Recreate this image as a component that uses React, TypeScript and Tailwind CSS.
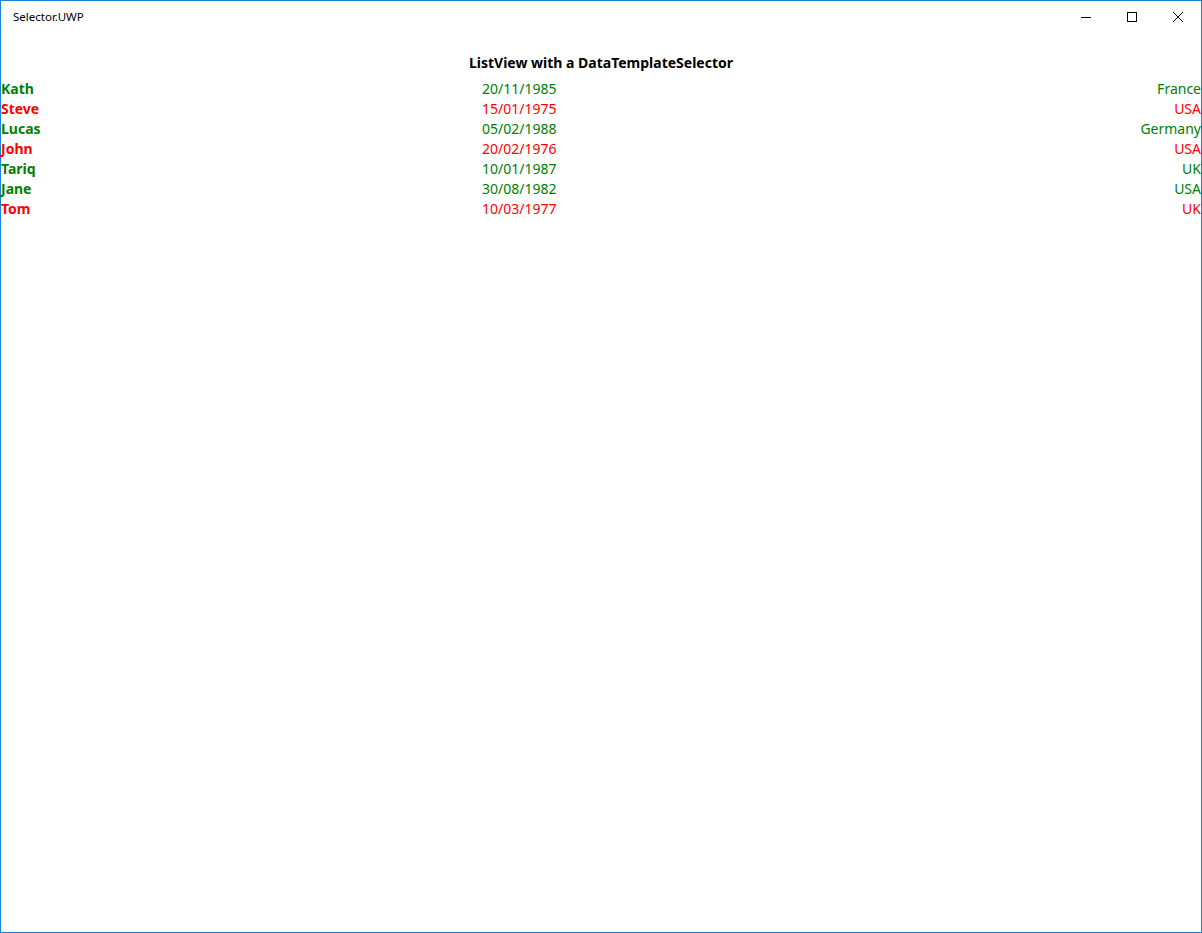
import React from 'react';

type Person = {
  name: string;
  born: string;
  country: string;
  flagged: boolean;
};

// flagged = rendered with the "red" template
const people: Person[] = [
  { name: 'Kath', born: '20/11/1985', country: 'France', flagged: false },
  { name: 'Steve', born: '15/01/1975', country: 'USA', flagged: true },
  { name: 'Lucas', born: '05/02/1988', country: 'Germany', flagged: false },
  { name: 'John', born: '20/02/1976', country: 'USA', flagged: true },
  { name: 'Tariq', born: '10/01/1987', country: 'UK', flagged: false },
  { name: 'Jane', born: '30/08/1982', country: 'USA', flagged: false },
  { name: 'Tom', born: '10/03/1977', country: 'UK', flagged: true },
];

const TitleBar: React.FC = () => (
  <div className="flex h-[31px] items-center justify-between">
    <span className="pl-3 text-[11.5px] text-black">Selector.UWP</span>
    <div className="flex h-full">
      <button className="flex h-full w-[46px] items-center justify-center">
        <svg width="10" height="10" viewBox="0 0 10 10">
          <path d="M0 5.5h10" stroke="#000" strokeWidth="1" />
        </svg>
      </button>
      <button className="flex h-full w-[46px] items-center justify-center">
        <svg width="10" height="10" viewBox="0 0 10 10">
          <rect x="0.5" y="0.5" width="9" height="9" fill="none" stroke="#000" strokeWidth="1" />
        </svg>
      </button>
      <button className="flex h-full w-[46px] items-center justify-center">
        <svg width="10" height="10" viewBox="0 0 10 10">
          <path d="M0 0L10 10M10 0L0 10" stroke="#000" strokeWidth="1" />
        </svg>
      </button>
    </div>
  </div>
);

export default function App() {
  return (
    <div
      className="flex h-[933px] w-[1202px] flex-col border border-[#1883d7] bg-white"
      style={{ fontFamily: '"Noto Sans", "Open Sans", sans-serif' }}
    >
      <TitleBar />

      <h1 className="mt-[21px] text-center text-[14px] leading-[20px] font-bold text-black">
        ListView with a DataTemplateSelector
      </h1>

      {/* ListView */}
      <div className="mt-[6px] flex flex-col">
        {people.map((p) => (
          <div
            key={p.name}
            className={`grid h-[20px] grid-cols-[481px_1fr_auto] items-center text-[14px] leading-[20px] ${
              p.flagged ? 'text-[#ff0000]' : 'text-[#008000]'
            }`}
          >
            <span className="font-bold">{p.name}</span>
            <span>{p.born}</span>
            <span className="text-right">{p.country}</span>
          </div>
        ))}
      </div>
    </div>
  );
}
